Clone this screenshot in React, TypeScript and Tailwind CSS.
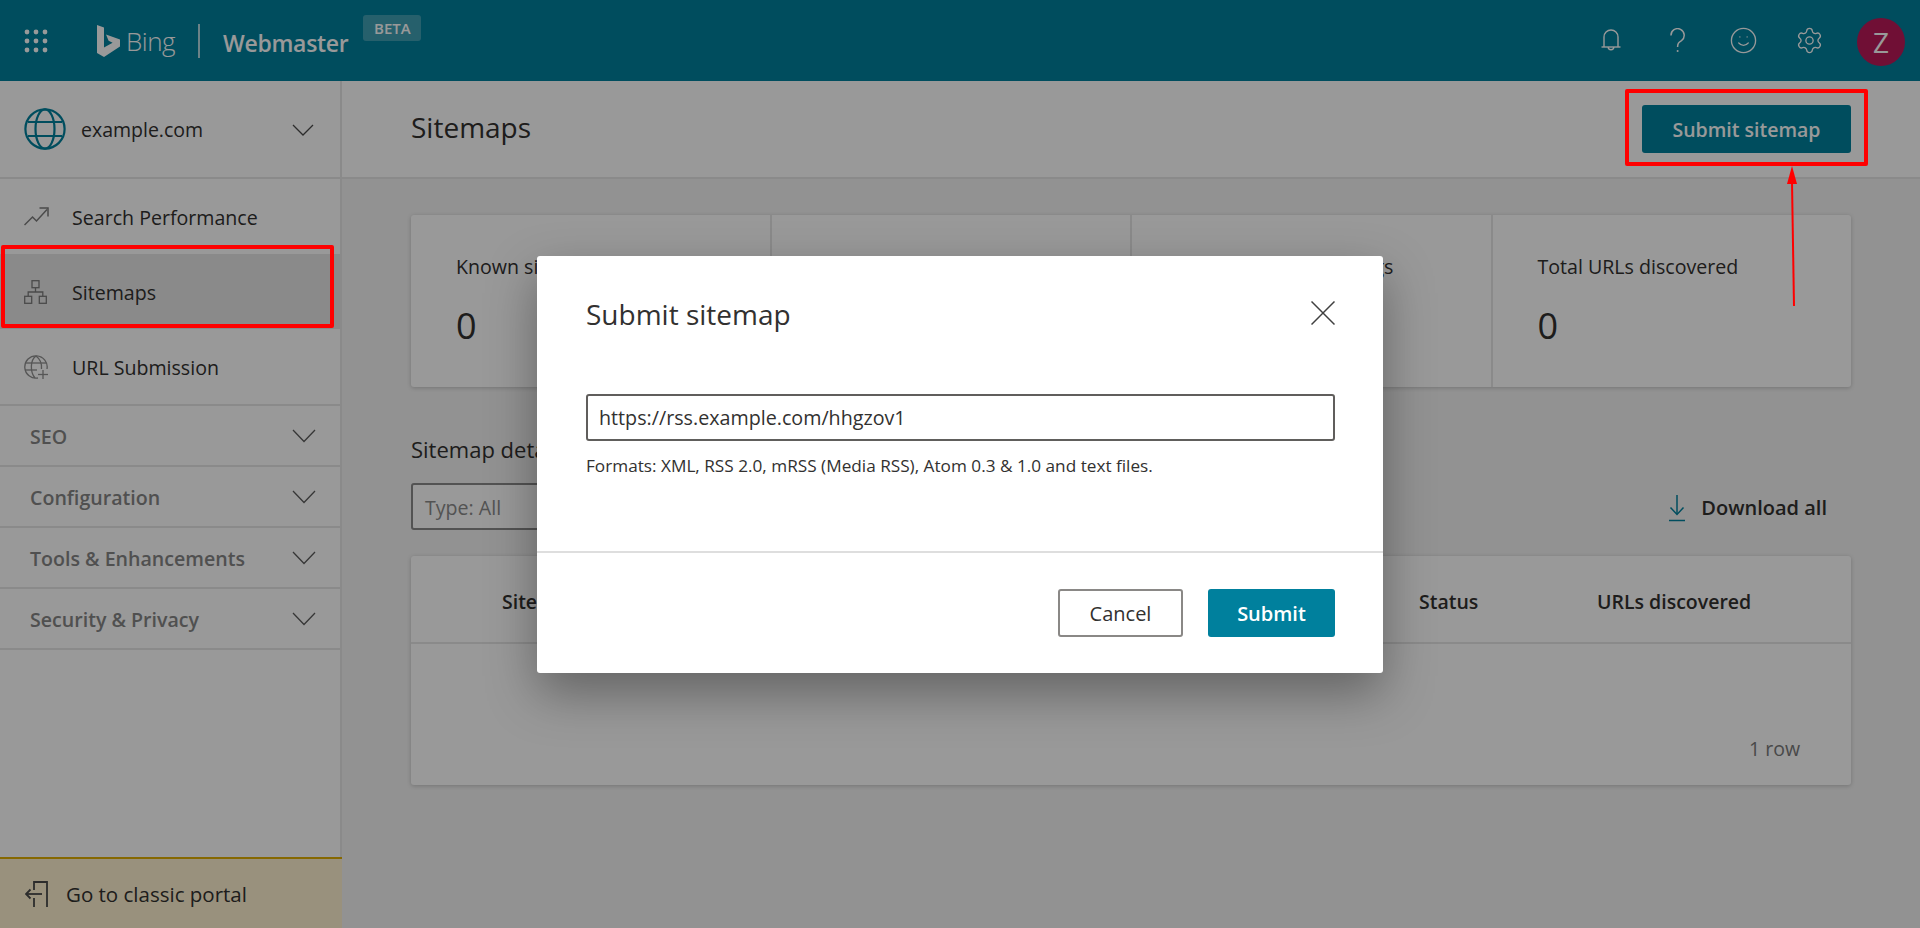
import React from 'react'
import { Smile, Settings } from 'lucide-react'

// thin chevron used all over the sidebar
const Chevron = () => (
  <svg width="24" height="14" viewBox="0 0 24 14" fill="none" stroke="#5c5c5c" strokeWidth="1.3" className="shrink-0">
    <polyline points="1,1 12,12.5 23,1" />
  </svg>
)

const GridDots = () => (
  <svg width="24" height="24" viewBox="0 0 24 24" fill="#ffffff">
    {[3, 12, 21].map((y) =>
      [3, 12, 21].map((x) => <circle key={`${x}-${y}`} cx={x} cy={y} r="2.4" />)
    )}
  </svg>
)

const BingLogo = () => (
  <svg width="23" height="32" viewBox="0 0 23 32" fill="#ffffff">
    <path d="M0 0 L7 2.4 V22.6 L15.6 17.8 L11.6 15.8 L9 9.6 L23 14.4 V21.4 L7 32 L0 28 Z" />
  </svg>
)

const BellIcon = () => (
  <svg width="20" height="23" viewBox="0 0 20 23" fill="none" stroke="#ffffff" strokeWidth="1.4">
    <path d="M3 18 V8 A7 7 0 0 1 17 8 V18" />
    <line x1="0.5" y1="18" x2="19.5" y2="18" />
    <path d="M7.2 18 a2.8 2.8 0 0 0 5.6 0" />
  </svg>
)

const HelpIcon = () => (
  <svg width="15" height="25" viewBox="0 0 15 25" fill="none" stroke="#ffffff" strokeWidth="1.5">
    <path d="M1 7.5 A6.6 6.6 0 1 1 11.5 12.6 C8.6 14.4 7.6 15.4 7.6 19" />
    <circle cx="7.6" cy="23" r="1" fill="#ffffff" stroke="none" />
  </svg>
)

const SiteGlobe = () => (
  <svg width="42" height="42" viewBox="0 0 42 42" fill="none" stroke="#00809d" strokeWidth="2.2">
    <circle cx="21" cy="21" r="19.6" />
    <ellipse cx="21" cy="21" rx="9.5" ry="19.6" />
    <line x1="4" y1="14" x2="38" y2="14" />
    <line x1="4" y1="28" x2="38" y2="28" />
  </svg>
)

const TrendIcon = () => (
  <svg width="25" height="19" viewBox="0 0 25 19" fill="none" stroke="#7c7c7c" strokeWidth="1.5">
    <polyline points="0.5,18 8.5,10 12.5,14 23,2.5" />
    <polyline points="15.5,1 24,1 24,9.5" />
  </svg>
)

const TreeIcon = () => (
  <svg width="23" height="24" viewBox="0 0 23 24" fill="none" stroke="#7c7c7c" strokeWidth="1.3">
    <rect x="8" y="0.7" width="7" height="7" />
    <rect x="0.7" y="16.3" width="7" height="7" />
    <rect x="15.3" y="16.3" width="7" height="7" />
    <path d="M11.5 7.7 V12 M4.2 16.3 V12 H18.8 V16.3" />
  </svg>
)

const GlobePlus = () => (
  <svg width="24" height="24" viewBox="0 0 24 24" fill="none" stroke="#8f8f8f" strokeWidth="1.3">
    <path d="M14 23 A11.2 11.2 0 1 1 23 14" />
    <path d="M12 1 C6 5 6 17 11 23 M12 1 C16 4 18 9 17.5 14" />
    <line x1="2" y1="8" x2="22" y2="8" />
    <line x1="1" y1="15" x2="13" y2="15" />
    <line x1="19" y1="15" x2="19" y2="24" />
    <line x1="14" y1="19.5" x2="24" y2="19.5" />
  </svg>
)

const PortalIcon = () => (
  <svg width="24" height="26" viewBox="0 0 24 26" fill="none" stroke="#4a4a4a" strokeWidth="1.8">
    <path d="M9 9 V1 H22 V26" />
    <line x1="9" y1="17" x2="9" y2="26" />
    <line x1="1" y1="13" x2="17" y2="13" />
    <polyline points="5.5,8.5 1,13 5.5,17.5" />
  </svg>
)

const DownloadIcon = () => (
  <svg width="16" height="28" viewBox="0 0 16 28" fill="none" stroke="#00809d" strokeWidth="1.5">
    <line x1="8" y1="1" x2="8" y2="20" />
    <polyline points="1.5,13.5 8,20.5 14.5,13.5" />
    <line x1="0" y1="26.5" x2="16" y2="26.5" />
  </svg>
)

const CloseIcon = () => (
  <svg width="24" height="24" viewBox="0 0 24 24" fill="none" stroke="#404040" strokeWidth="1.5">
    <line x1="0.5" y1="0.5" x2="23.5" y2="23.5" />
    <line x1="23.5" y1="0.5" x2="0.5" y2="23.5" />
  </svg>
)

const NavItem = ({ icon, label, active }: { icon: React.ReactNode; label: string; active?: boolean }) => (
  <div className={`flex h-[75px] items-center pl-6 ${active ? 'bg-[#e6e6e6]' : ''}`}>
    <span className="flex w-12 shrink-0 items-center">{icon}</span>
    <span className="pt-[2px] text-[19.6px] text-[#323130]">{label}</span>
  </div>
)

const NavGroup = ({ label }: { label: string }) => (
  <div className="flex h-[61px] items-center justify-between border-b-2 border-[#e6e6e6] pl-[30px] pr-[24px]">
    <span className="pt-[3px] text-[19.6px] font-semibold text-[#858585]">{label}</span>
    <Chevron />
  </div>
)

const StatCard = ({ label, last }: { label: string; last?: boolean }) => (
  <div className={`flex-1 pl-[45px] pt-[38px] ${last ? '' : 'border-r-2 border-[#e6e6e6]'}`}>
    <div className="text-[19.6px] leading-[28px] text-[#323130]">{label}</div>
    <div className="mt-[22px] text-[36px] leading-[46px] text-[#323130]">0</div>
  </div>
)

export default function App() {
  return (
    <div className="relative flex h-[928px] w-[1920px] flex-col overflow-hidden bg-[#f3f3f3] font-['Open_Sans','Noto_Sans',sans-serif]">
      {/* top bar */}
      <header className="flex h-[81px] shrink-0 items-center bg-[#00809d] pl-6 text-white">
        <GridDots />
        <div className="ml-[49px]"><BingLogo /></div>
        <span className="ml-[6px] text-[26px] font-light leading-none tracking-[-0.5px]">Bing</span>
        <span className="ml-[23px] h-[34px] w-[2px] bg-white/70" />
        <span className="ml-[23px] mt-[5px] text-[23px] font-semibold leading-none tracking-[-0.3px]">Webmaster</span>
        <span className="mb-[25px] ml-[15px] flex h-[26px] w-[58px] items-center justify-center rounded-[3px] bg-white/25 text-[15px] font-semibold">BETA</span>
        <div className="ml-auto flex items-center">
          <span className="flex w-[66px] justify-center"><BellIcon /></span>
          <span className="flex w-[66px] justify-center"><HelpIcon /></span>
          <span className="flex w-[66px] justify-center"><Smile size={29} strokeWidth={1.1} /></span>
          <span className="flex w-[66px] justify-center"><Settings size={29} strokeWidth={1.1} /></span>
          <span className="ml-[15px] mr-[15px] mt-[3px] flex h-12 w-12 items-center justify-center rounded-full bg-[#bb1959] text-[28px]">Z</span>
        </div>
      </header>

      <div className="flex min-h-0 flex-1">
        {/* sidebar */}
        <aside className="flex w-[342px] shrink-0 flex-col border-r-2 border-[#e6e6e6] bg-white">
          <div className="flex h-[98px] shrink-0 items-center border-b-2 border-[#e6e6e6] pl-6 pr-[26px]">
            <SiteGlobe />
            <span className="ml-[15px] pt-[2px] text-[19.5px] text-[#323130]">example.com</span>
            <span className="ml-auto pt-[2px]"><svg width="22" height="12" viewBox="0 0 22 12" fill="none" stroke="#4a4a4a" strokeWidth="1.3"><polyline points="1,1 11,11 21,1" /></svg></span>
          </div>
          <div className="border-b-2 border-[#e6e6e6]">
            <NavItem icon={<TrendIcon />} label="Search Performance" />
            <NavItem active icon={<TreeIcon />} label="Sitemaps" />
            <NavItem icon={<GlobePlus />} label="URL Submission" />
          </div>
          <NavGroup label="SEO" />
          <NavGroup label="Configuration" />
          <NavGroup label="Tools & Enhancements" />
          <NavGroup label="Security & Privacy" />
          <div className="-mr-[2px] mt-auto flex h-[71px] items-center border-t-2 border-[#e0ae00] bg-[#fff2d0] pl-[25px] pt-[1px]">
            <PortalIcon />
            <span className="ml-[17px] text-[20.5px] font-medium text-[#323130]">Go to classic portal</span>
          </div>
        </aside>

        {/* main */}
        <main className="flex min-w-0 flex-1 flex-col">
          <div className="flex h-[98px] shrink-0 items-center justify-between border-b-2 border-[#e6e6e6] bg-white pl-[69px] pr-[69px]">
            <h1 className="pb-[5px] text-[28px] font-normal text-[#323130]">Sitemaps</h1>
            <button className="h-12 w-[209px] rounded-[3px] bg-[#00809d] pt-[1px] text-[19.5px] font-semibold text-white">Submit sitemap</button>
          </div>
          <div className="px-[69px] pt-[36px]">
            <div className="flex h-[172px] rounded-[3px] bg-white shadow-[0_1px_4px_rgba(0,0,0,0.2)]">
              <StatCard label="Known sitemaps" />
              <StatCard label="Sitemaps with errors" />
              <StatCard label="Sitemaps with warnings" />
              <StatCard last label="Total URLs discovered" />
            </div>
            <h2 className="mt-[45px] text-[22px] font-normal leading-[34px] text-[#323130]">Sitemap details</h2>
            <div className="mt-[17px] flex items-center justify-between">
              <div className="flex h-[47px] w-[300px] items-center rounded-[3px] border-2 border-[#8a8a8a] bg-white pl-[12px] pt-[2px] text-[19.6px] text-[#8a8a8a]">Type: All</div>
              <div className="flex items-center pr-[24px] pt-[2px]">
                <DownloadIcon />
                <span className="ml-[16px] text-[20px] font-semibold text-[#323130]">Download all</span>
              </div>
            </div>
            <div className="mt-[26px] h-[229px] rounded-[3px] bg-white shadow-[0_1px_4px_rgba(0,0,0,0.2)]">
              <div className="flex h-[88px] items-center border-b-2 border-[#e6e6e6] pt-[5px] text-[19.5px] font-semibold text-[#323130]">
                <span className="ml-[91px] w-[917px]">Sitemap</span>
                <span className="w-[178px]">Status</span>
                <span>URLs discovered</span>
              </div>
              <div className="flex justify-end pr-[51px] pt-[90px] text-[19.5px] text-[#7a7a7a]">1 row</div>
            </div>
          </div>
        </main>
      </div>

      {/* dim layer and dialog */}
      <div className="absolute inset-0 flex items-center justify-center bg-black/40">
        <div className="flex h-[417px] w-[846px] flex-col rounded-[3px] bg-white shadow-[0_20px_50px_rgba(0,0,0,0.35)]">
          <div className="flex items-start justify-between pl-[49px] pr-[48px] pt-[39px]">
            <h3 className="text-[28px] font-normal leading-[38px] text-[#323130]">Submit sitemap</h3>
            <span className="mt-[6px]"><CloseIcon /></span>
          </div>
          <div className="pl-[49px] pr-[48px] pt-[61px]">
            <div className="flex h-[47px] items-center rounded-[3px] border-2 border-[#605e5c] pl-[11px] pt-[2px] text-[19.7px] text-[#323130]">https://rss.example.com/hhgzov1</div>
            <p className="mt-[14px] text-[17.2px] leading-[22px] text-[#323130]">Formats: XML, RSS 2.0, mRSS (Media RSS), Atom 0.3 &amp; 1.0 and text files.</p>
          </div>
          <div className="mt-auto flex h-[122px] items-center justify-end gap-[25px] border-t-2 border-[#dedede] pr-[48px]">
            <button className="h-12 w-[125px] rounded-[3px] border-2 border-[#8a8886] pt-[2px] text-[20px] font-medium text-[#323130]">Cancel</button>
            <button className="h-12 w-[127px] rounded-[3px] bg-[#00809d] pt-[2px] text-[20px] font-semibold text-white">Submit</button>
          </div>
        </div>
      </div>

      {/* red annotations from the screenshot */}
      <div className="absolute left-[1625px] top-[89px] h-[77px] w-[243px] rounded-[2px] border-4 border-[#ff0000]" />
      <div className="absolute left-[1px] top-[245px] h-[83px] w-[333px] rounded-[2px] border-4 border-[#ff0000]" />
      <svg className="absolute left-[1780px] top-[164px]" width="24" height="144" viewBox="0 0 24 144" fill="#ff0000">
        <polygon points="12,2 17,20 7,20" />
        <line x1="12" y1="18" x2="14" y2="142" stroke="#ff0000" strokeWidth="2" />
      </svg>
    </div>
  )
}
